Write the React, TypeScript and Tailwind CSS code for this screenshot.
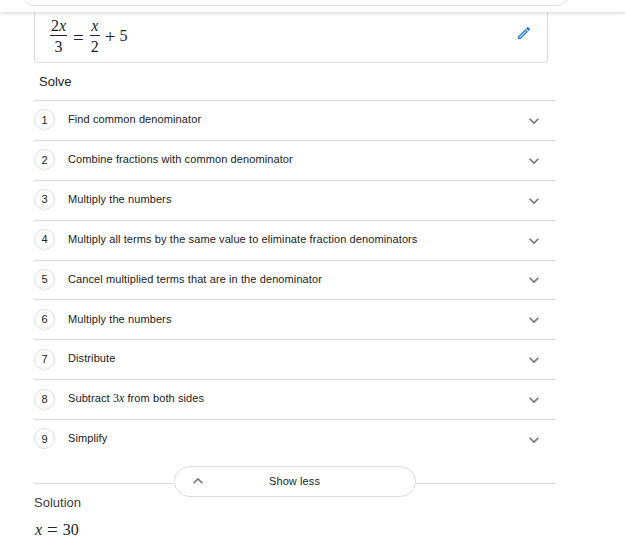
const steps: React.ReactNode[] = [
  "Find common denominator",
  "Combine fractions with common denominator",
  "Multiply the numbers",
  "Multiply all terms by the same value to eliminate fraction denominators",
  "Cancel multiplied terms that are in the denominator",
  "Multiply the numbers",
  "Distribute",
  <>Subtract <span className="font-['Liberation_Serif',serif] text-[12px] tracking-normal">3<i>x</i></span> from both sides</>,
  "Simplify",
];

function Chevron({ up = false }: { up?: boolean }) {
  return (
    <svg width="20" height="20" viewBox="0 0 24 24" fill="#70757a" className={up ? "rotate-180" : ""}>
      <path d="M7.41 8.59L12 13.17l4.59-4.58L18 10l-6 6-6-6 1.41-1.41z" />
    </svg>
  );
}

function Frac({ top, bottom, w }: { top: React.ReactNode; bottom: React.ReactNode; w: string }) {
  return (
    <span className={`flex flex-col items-center ${w}`}>
      <span className="h-[22px] leading-[24px] border-b border-[#202124] w-full text-center">{top}</span>
      <span className="h-[22px] leading-[21px]">{bottom}</span>
    </span>
  );
}

export default function App() {
  return (
    <div className="w-[626px] h-[547px] overflow-hidden bg-white font-['Liberation_Sans',Arial,sans-serif] text-[#202124]">
      <header className="relative z-10 h-3 overflow-hidden bg-white shadow-[0_1px_4px_rgba(0,0,0,0.16)] pl-5">
        <div className="w-[551px] h-[30px] -mt-[24px] rounded-[18px] border border-[#dfe1e5] bg-white" />
      </header>
      <main className="pl-[34px] w-[556px]">
        <section className="w-[514px] h-[51px] rounded-b border-x border-b border-[#dadce0] flex items-center justify-between px-[15px] font-['Liberation_Serif',serif] text-[16px]">
          <div className="flex items-center -mt-[2px]">
            <Frac w="w-[17px]" top={<>2<i>x</i></>} bottom="3" />
            <span className="ml-[6px] mr-[6px] mt-[2px] text-[19px] leading-none">=</span>
            <Frac w="w-[10px]" top={<i>x</i>} bottom="2" />
            <span className="ml-[5px] mt-[1px] text-[19px] leading-none">+</span>
            <span className="ml-[4px]">5</span>
          </div>
          <svg width="16" height="16" viewBox="0 0 24 24" fill="#1a73e8" className="-mt-[8px]">
            <path d="M14.06 9.02l.92.92L5.92 19H5v-.92l9.06-9.06M17.66 3c-.25 0-.51.1-.7.29l-1.83 1.83 3.75 3.75 1.83-1.83c.39-.39.39-1.02 0-1.41l-2.34-2.34c-.2-.2-.45-.29-.71-.29zm-3.6 3.19L3 17.25V21h3.75L17.81 9.94l-3.75-3.75z" />
          </svg>
        </section>
        <h2 className="h-[37px] pl-[5px] pt-[10px] text-[13px] leading-[17px] font-normal">Solve</h2>
        <ol>
          {steps.map((s, i) => (
            <li key={i} className="h-[39.875px] border-t border-[#dadce0] flex items-center">
              <span className="w-[21px] h-[21px] rounded-full border border-[#dadce0] flex items-center justify-center text-[11px] shrink-0 mt-[-1px]">{i + 1}</span>
              <span className="ml-[13px] text-[11px] leading-[14px] tracking-[0.1px] flex-1 -mt-[2.5px]">{s}</span>
              <span className="mr-[12.5px] mt-[1px]"><Chevron /></span>
            </li>
          ))}
        </ol>
        <div className="flex h-[31px] mt-[7px]">
          <div className="w-[140px] h-[18px] border-b border-[#dadce0]" />
          <button className="w-[242px] h-[31px] rounded-full border border-[#dadce0] bg-white flex items-center pl-[13px] text-[11px] tracking-[0.1px]">
            <Chevron up />
            <span className="ml-[61px]">Show less</span>
          </button>
          <div className="flex-1 h-[18px] border-b border-[#dadce0]" />
        </div>
        <h2 className="mt-[-3px] text-[13px] leading-[17px] font-normal text-[#3c4043]">Solution</h2>
        <p className="mt-[9px] pl-[1px] flex items-center font-['Liberation_Serif',serif] text-[16px] leading-[20px]">
          <i>x</i><span className="ml-[5px] mr-[5px] text-[19px] leading-none">=</span>30
        </p>
      </main>
    </div>
  );
}
